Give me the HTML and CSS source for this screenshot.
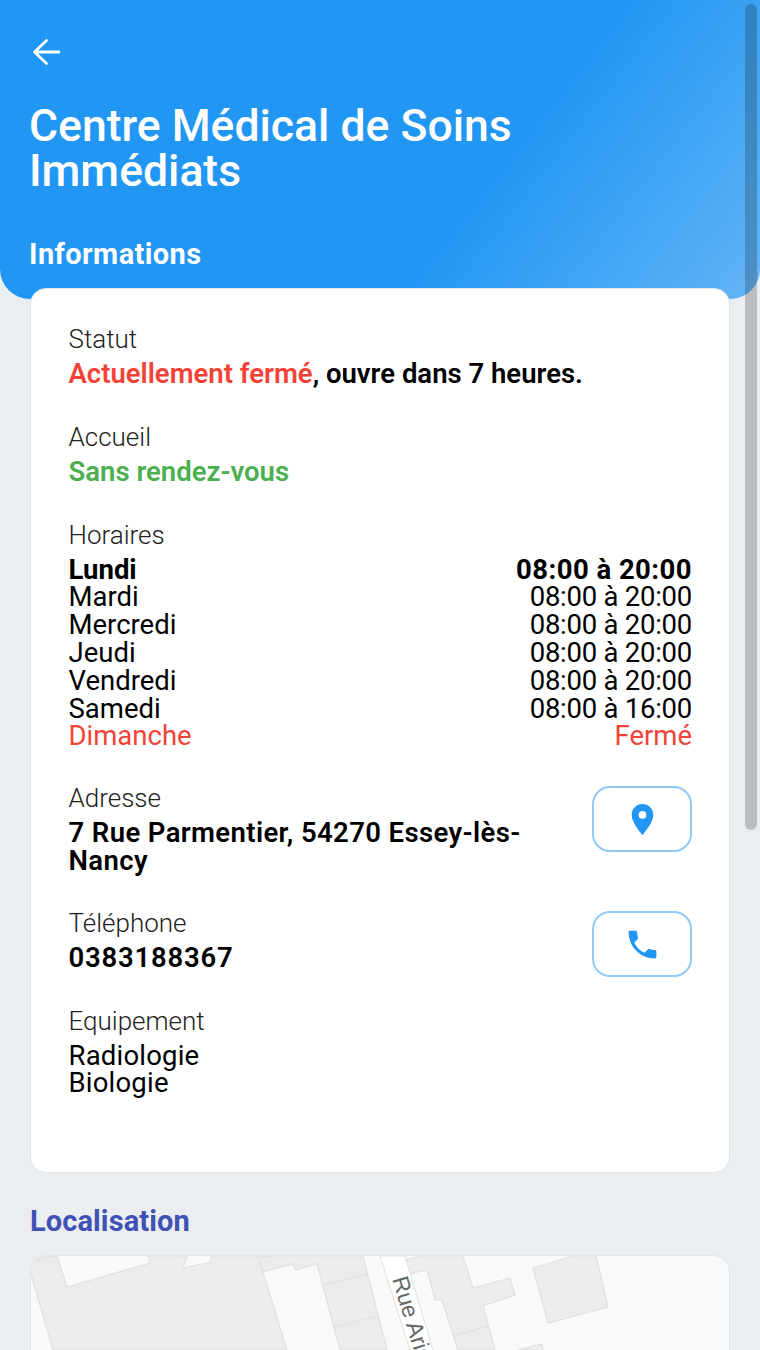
FILE: index.html
```html
<!DOCTYPE html>
<html lang="fr">
<head>
<meta charset="utf-8">
<title>Centre Médical de Soins Immédiats</title>
<link rel="stylesheet" href="styles.css">
</head>
<body>
<div class="screen">
  <header class="hero">
    <svg class="back" viewBox="0 0 32 32" width="32" height="32" aria-hidden="true"><path d="M30 16H6M17.500 4.500 5.500 16l12 11.500" fill="none" stroke="#fff" stroke-width="2.800" stroke-linecap="round" stroke-linejoin="round"/></svg>
    <h1 class="title">Centre Médical de Soins Immédiats</h1>
    <h2 class="hero-section">Informations</h2>
  </header>
  <main class="content">
    <section class="card info">
      <div class="field">
        <div class="label">Statut</div>
        <div class="value strong"><span class="red">Actuellement fermé</span>, ouvre dans 7 heures.</div>
      </div>
      <div class="field">
        <div class="label">Accueil</div>
        <div class="value strong green">Sans rendez-vous</div>
      </div>
      <div class="field hours-field">
        <div class="label">Horaires</div>
        <div class="hours">
          <div class="day today"><span>Lundi</span><span class="time">08:00 à 20:00</span></div>
          <div class="day"><span>Mardi</span><span class="time">08:00 à 20:00</span></div>
          <div class="day"><span>Mercredi</span><span class="time">08:00 à 20:00</span></div>
          <div class="day"><span>Jeudi</span><span class="time">08:00 à 20:00</span></div>
          <div class="day"><span>Vendredi</span><span class="time">08:00 à 20:00</span></div>
          <div class="day"><span>Samedi</span><span class="time">08:00 à 16:00</span></div>
          <div class="day red"><span>Dimanche</span><span>Fermé</span></div>
        </div>
      </div>
      <div class="field row">
        <div class="grow">
          <div class="label">Adresse</div>
          <div class="value strong address">7 Rue Parmentier, 54270 Essey-lès-Nancy</div>
        </div>
        <button class="action" aria-label="Itinéraire">
          <svg viewBox="0 0 24 24" width="37" height="37" aria-hidden="true"><path fill="#2196f3" d="M12 2C8.130 2 5 5.130 5 9c0 5.250 7 13 7 13s7-7.750 7-13c0-3.870-3.130-7-7-7zm0 9.500a2.500 2.500 0 1 1 0-5 2.500 2.500 0 0 1 0 5z"/></svg>
        </button>
      </div>
      <div class="field row">
        <div class="grow">
          <div class="label">Téléphone</div>
          <div class="value strong phone">0383188367</div>
        </div>
        <button class="action" aria-label="Appeler">
          <svg viewBox="0 0 24 24" width="37" height="37" aria-hidden="true"><path fill="#2196f3" d="M6.620 10.790c1.440 2.830 3.760 5.140 6.590 6.590l2.200-2.200c.270-.270.670-.360 1.020-.240 1.120.370 2.330.570 3.570.570.550 0 1 .450 1 1V20c0 .550-.450 1-1 1-9.390 0-17-7.610-17-17 0-.550.450-1 1-1h3.500c.550 0 1 .450 1 1 0 1.250.200 2.450.570 3.570.110.350.030.740-.250 1.020l-2.200 2.200z"/></svg>
        </button>
      </div>
      <div class="field">
        <div class="label">Equipement</div>
        <div class="value plain">Radiologie</div>
        <div class="value plain">Biologie</div>
      </div>
    </section>
    <h2 class="section">Localisation</h2>
    <section class="card map">
      <svg class="map-art" viewBox="31 1256 698 94" width="698" height="94" aria-hidden="true">
        <g class="bldg">
          <path d="M31 1256H57L67 1287 150 1263 148 1256H187L183 1268 211 1262 211 1256H258L287 1350H53L31 1274Z"/>
          <path d="M258 1256H363L387 1350H340L317 1264 295 1270 293 1264 263 1272Z"/>
          <path d="M405 1260 422 1256H463L473 1288 510 1278 515 1295 483 1306 495 1350H458L442 1300H435L427 1270 408 1274Z"/>
          <path d="M533 1268 573 1256H596L608 1307 548 1323Z"/>
          <path d="M517 1350 542 1344 543 1350Z"/>
        </g>
        <path class="line" d="M33 1262 55 1256M260 1258 272 1256M324 1285 367 1274M334 1327 378 1316M453 1336 488 1326"/>
        <path class="road" d="M380 1256H405L433 1350H410Z"/>
        <text class="map-label" transform="translate(392 1279) rotate(73)">Rue Aristide</text>
      </svg>
    </section>
  </main>
  <div class="scrollbar"></div>
</div>
</body>
</html>
```
FILE: styles.css
```css
* { box-sizing: border-box; }
html, body { margin: 0; padding: 0; }
body { font-family: Roboto, "Liberation Sans", sans-serif; background: #ebeef1; color: #000; }
.screen { width: 760px; height: 1350px; overflow: hidden; position: relative; }
.hero {
  height: 299px;
  padding: 36px 29px 0;
  border-radius: 0 0 30px 30px;
  background: linear-gradient(128deg, #2196f3 0%, #2196f3 63%, #64b5f6 100%);
  color: #fff;
}
.back { display: block; margin-bottom: 36px; }
.title { margin: 0; font-size: 44.500px; line-height: 45px; font-weight: 500; max-width: 600px; }
.hero-section { margin: 42px 0 0; font-size: 29px; line-height: 36px; font-weight: 700; letter-spacing: .4px; }
.content { padding: 0 30px; margin-top: -11px; position: relative; }
.card { background: #fff; border: 1px solid #e2e4e6; border-radius: 16px; width: 700px; }
.info { height: 885px; padding: 36px 37px 0 37.500px; }
.field { margin-bottom: 35px; }
.hours-field { margin-bottom: 34px; }
.row { display: flex; align-items: flex-start; gap: 40px; margin-bottom: 34.500px; }
.grow { flex: 1; min-width: 0; }
.label { font-size: 26px; line-height: 28px; font-weight: 300; color: #222; margin-bottom: 7px; }
.value { font-size: 27.500px; line-height: 27.800px; }
.value.strong { font-weight: 600; }
.plain { letter-spacing: .2px; }
.address { letter-spacing: .38px; }
.phone { letter-spacing: .8px; }
.red { color: #f44336; }
.green { color: #4caf50; }
.hours { font-size: 27.500px; line-height: 27.800px; }
.day { display: flex; justify-content: space-between; }
.time { letter-spacing: -.25px; }
.today { font-weight: 700; }
.today .time { letter-spacing: .45px; }
.action {
  flex: none;
  width: 100px;
  height: 66px;
  margin: 2px 0 -7px;
  display: flex;
  align-items: center;
  justify-content: center;
  background: #fff;
  border: 2px solid #90caf9;
  border-radius: 18px;
  padding: 0;
}
.section { margin: 30px 0 16px; font-size: 29px; line-height: 36px; font-weight: 700; letter-spacing: .1px; color: #3f51b5; }
.map { height: 120px; background: #f8f9fb; overflow: hidden; }
.map-art { display: block; }
.bldg { fill: #ececec; stroke: #e0e0e0; stroke-width: 1.200; }
.line { fill: none; stroke: #e0e0e0; stroke-width: 1.200; }
.road { fill: #fff; stroke: #e0e0e0; stroke-width: 1; }
.map-label { font-family: "Liberation Sans", sans-serif; font-size: 23px; fill: #666; }
.scrollbar { position: absolute; top: 4px; left: 745px; width: 12px; height: 826px; border-radius: 6px; background: rgba(20, 20, 20, .22); }
```
